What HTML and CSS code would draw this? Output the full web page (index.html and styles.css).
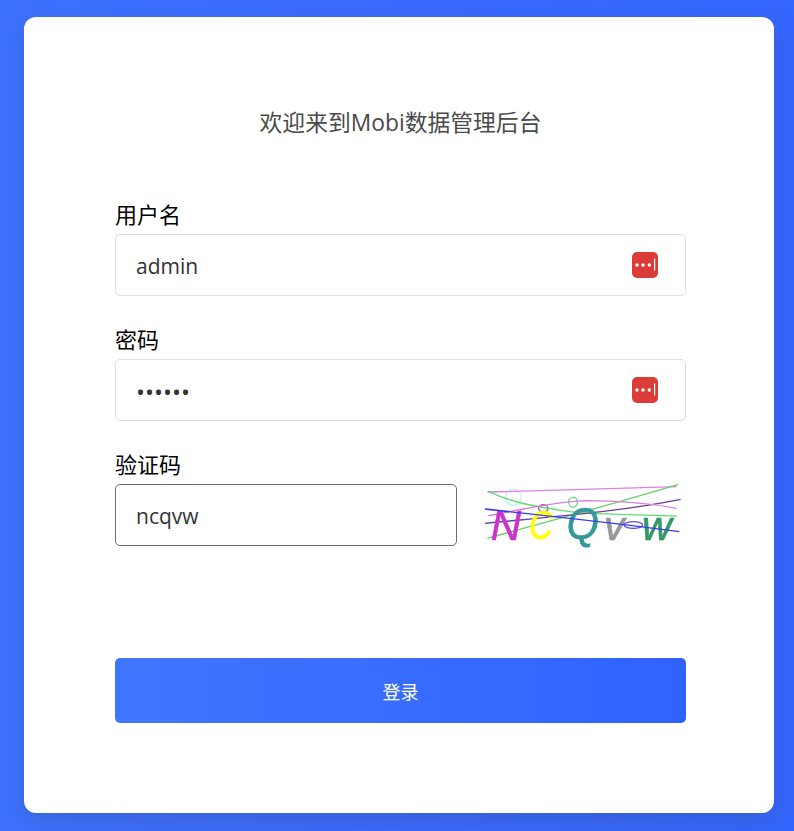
FILE: index.html
```html
<!DOCTYPE html>
<html lang="zh">
<head>
<meta charset="utf-8">
<title>Mobi</title>
<link rel="stylesheet" href="styles.css">
</head>
<body>
<main class="card">
  <h1 class="title">欢迎来到Mobi数据管理后台</h1>
  <form class="form">
    <div class="field">
      <label class="label">用户名</label>
      <div class="box">
        <span class="value">admin</span>
        <svg class="keyicon" width="26" height="26" viewBox="0 0 26 26"><rect width="26" height="26" rx="5" fill="#db3c38"/><circle cx="5" cy="13" r="1.7" fill="#fff"/><circle cx="11" cy="13" r="1.7" fill="#fff"/><circle cx="17.3" cy="13" r="1.7" fill="#fff"/><rect x="22" y="6.5" width="1.2" height="12" fill="#fff"/></svg>
      </div>
    </div>
    <div class="field">
      <label class="label">密码</label>
      <div class="box">
        <span class="value dots">••••••</span>
        <svg class="keyicon" width="26" height="26" viewBox="0 0 26 26"><rect width="26" height="26" rx="5" fill="#db3c38"/><circle cx="5" cy="13" r="1.7" fill="#fff"/><circle cx="11" cy="13" r="1.7" fill="#fff"/><circle cx="17.3" cy="13" r="1.7" fill="#fff"/><rect x="22" y="6.5" width="1.2" height="12" fill="#fff"/></svg>
      </div>
    </div>
    <div class="field">
      <label class="label">验证码</label>
      <div class="captcha-row">
        <div class="box focus"><span class="value">ncqvw</span></div>
        <svg class="captcha" width="206" height="62" viewBox="30 42 618 186">
          <g class="cstroke">
            <circle cx="130" cy="82" r="24" stroke="#b5f2f7"/>
            <ellipse cx="309" cy="97" rx="13" ry="15" stroke="#55e070"/>
            <ellipse cx="220" cy="115" rx="14" ry="11" stroke="#9a4fa8"/>
            <ellipse cx="490" cy="165" rx="28" ry="10" stroke="#5a50e8"/>
            <path d="M52 66C250 62 450 54 620 50" stroke="#e07fe4"/>
            <path d="M55 64C120 95 180 108 300 125C380 134 500 134 620 138" stroke="#5fdc72"/>
            <path d="M52 205C250 150 420 105 625 43" stroke="#6ccf6a"/>
            <path d="M45 160C250 140 450 125 632 88" stroke="#6a3d9a"/>
            <path d="M55 137C150 120 250 95 350 92C450 92 540 100 620 115" stroke="#d47fdc"/>
          </g>
          <text class="cl" x="62" y="210" font-size="126" fill="#cc33cc" stroke="#cc33cc">N</text>
          <text class="cl" x="178" y="208" font-size="122" fill="#ffff00" stroke="#ffff00" textLength="70" lengthAdjust="spacingAndGlyphs">C</text>
          <text class="cl" x="290" y="208" font-size="132" fill="#339999" stroke="#339999" textLength="96" lengthAdjust="spacingAndGlyphs">Q</text>
          <text class="cl" x="402" y="210" font-size="124" fill="#999999" stroke="#999999">v</text>
          <text class="cl" x="516" y="210" font-size="124" fill="#339966" stroke="#339966">w</text>
          <path class="cstroke" d="M45 117C250 140 450 160 628 185" stroke="#3a3af0"/>
        </svg>
      </div>
    </div>
    <button class="submit" type="button">登录</button>
  </form>
</main>
</body>
</html>
```
FILE: styles.css
```css
* { box-sizing: border-box; }
html, body { height: 100%; }
body {
  margin: 0;
  padding: 17px 20px 18px 24px;
  background: linear-gradient(90deg, #3d72ff 0%, #3a6aff 50%, #3366ff 100%);
  font-family: "Open Sans", "Noto Sans CJK SC", sans-serif;
}
.card {
  width: 750px;
  height: 796px;
  background: #fff;
  border-radius: 12px;
  padding: 88px 88px 0 91px;
  box-shadow: 0 8px 24px rgba(60, 80, 150, 0.4);
}
.title {
  margin: 0 0 63px;
  font-size: 22.8px;
  font-weight: 400;
  line-height: 36px;
  text-align: center;
  color: #4a4a4a;
}
.form { display: flex; flex-direction: column; }
.field { display: flex; flex-direction: column; margin-bottom: 33px; }
.label {
  font-size: 22px;
  line-height: 20px;
  color: #000;
  height: 30px;
}
.box {
  height: 62px;
  border: 1px solid #dedede;
  border-radius: 5px;
  display: flex;
  align-items: center;
  justify-content: space-between;
  padding: 0 27px 0 20px;
  background: #fff;
}
.value {
  font-family: "Open Sans", "Noto Sans", sans-serif;
  font-size: 21px;
  color: #333;
  padding-top: 2px;
}
.dots { font-size: 24px; }
.keyicon { display: block; flex: none; }
.captcha-row { display: flex; justify-content: space-between; align-items: flex-start; }
.captcha-row .box { width: 342px; }
.box.focus { border-color: #6e6e6e; }
.captcha { display: block; overflow: visible; filter: blur(0.4px); }
.cstroke { fill: none; stroke-width: 4; }
.cl { font-family: "Liberation Sans", sans-serif; font-style: italic; stroke-width: 2; }
.submit {
  margin-top: 79px;
  height: 65px;
  width: 100%;
  border: 0;
  border-radius: 5px;
  background: linear-gradient(90deg, #4076ff 0%, #2f62ff 100%);
  color: #fff;
  font-family: "Noto Sans CJK SC", sans-serif;
  font-size: 18px;
}
```
